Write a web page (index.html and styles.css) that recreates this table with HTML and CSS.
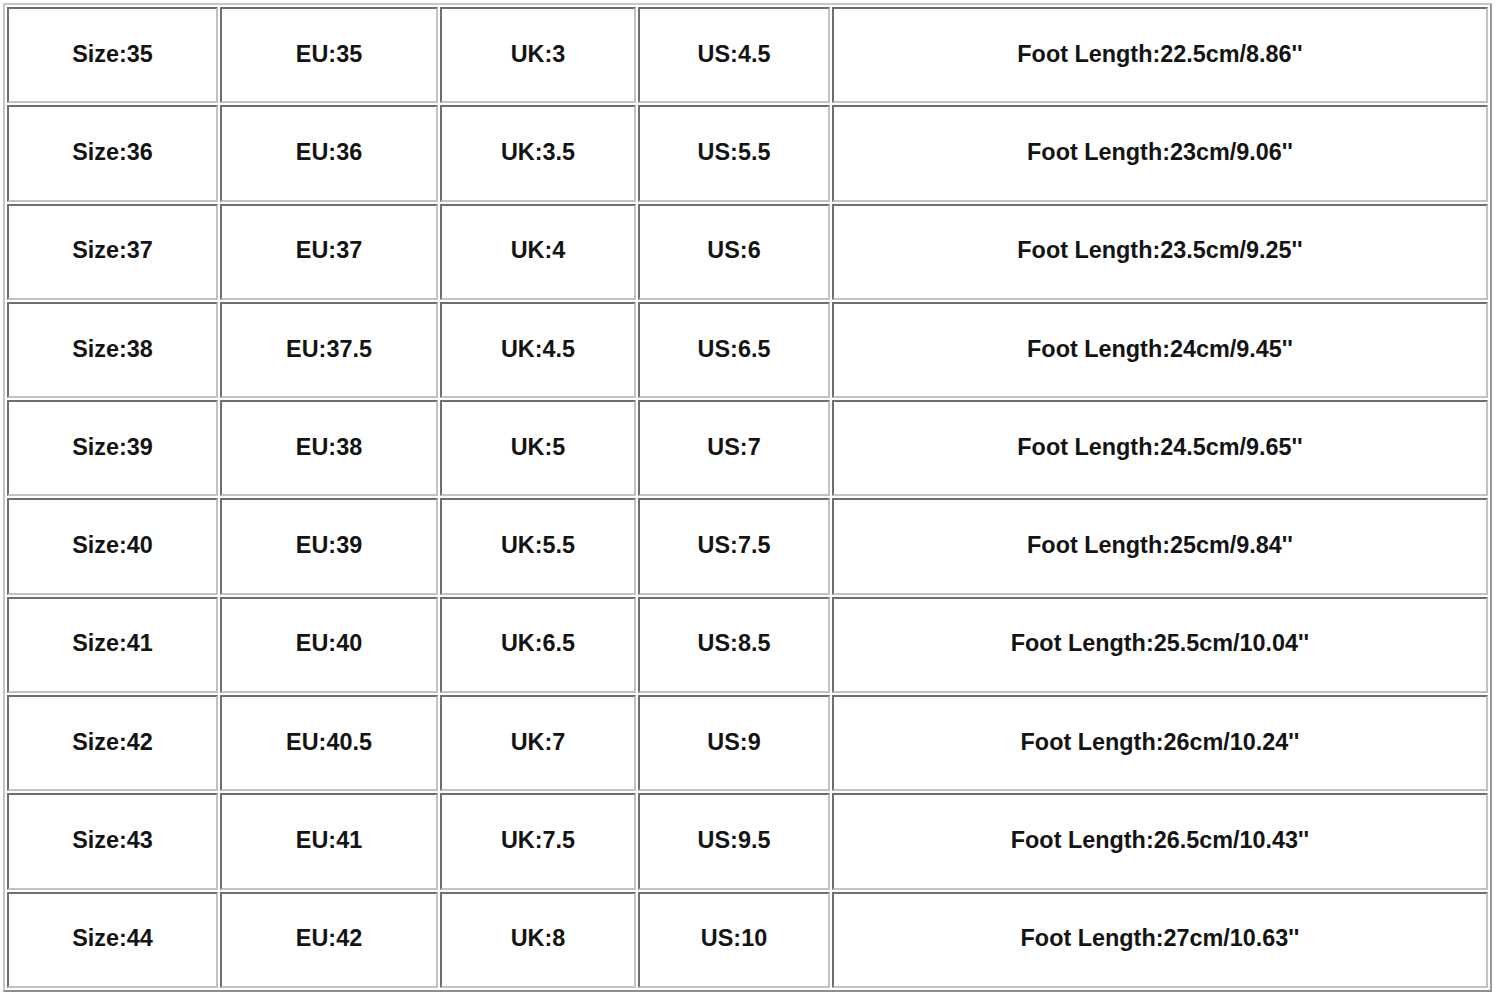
FILE: index.html
```html
<!DOCTYPE html>
<html>
<head>
<meta charset="utf-8">
<link rel="stylesheet" href="styles.css">
</head>
<body>
<table class="chart">
<tr><td class="c1">Size:35</td><td class="c2">EU:35</td><td class="c3">UK:3</td><td class="c4">US:4.5</td><td class="c5">Foot Length:22.5cm/8.86''</td></tr>
<tr><td>Size:36</td><td>EU:36</td><td>UK:3.5</td><td>US:5.5</td><td>Foot Length:23cm/9.06''</td></tr>
<tr><td>Size:37</td><td>EU:37</td><td>UK:4</td><td>US:6</td><td>Foot Length:23.5cm/9.25''</td></tr>
<tr><td>Size:38</td><td>EU:37.5</td><td>UK:4.5</td><td>US:6.5</td><td>Foot Length:24cm/9.45''</td></tr>
<tr><td>Size:39</td><td>EU:38</td><td>UK:5</td><td>US:7</td><td>Foot Length:24.5cm/9.65''</td></tr>
<tr><td>Size:40</td><td>EU:39</td><td>UK:5.5</td><td>US:7.5</td><td>Foot Length:25cm/9.84''</td></tr>
<tr><td>Size:41</td><td>EU:40</td><td>UK:6.5</td><td>US:8.5</td><td>Foot Length:25.5cm/10.04''</td></tr>
<tr><td>Size:42</td><td>EU:40.5</td><td>UK:7</td><td>US:9</td><td>Foot Length:26cm/10.24''</td></tr>
<tr><td>Size:43</td><td>EU:41</td><td>UK:7.5</td><td>US:9.5</td><td>Foot Length:26.5cm/10.43''</td></tr>
<tr class="last"><td>Size:44</td><td>EU:42</td><td>UK:8</td><td>US:10</td><td>Foot Length:27cm/10.63''</td></tr>
</table>
</body>
</html>
```
FILE: styles.css
```css
html, body {
  margin: 0;
  padding: 0;
  background: #ffffff;
}
.chart {
  margin: 3px 0 0 3px;
  border-collapse: separate;
  border-spacing: 2px;
  border-style: solid;
  border-width: 2px;
  border-color: #c4c4c4 #9a9a9a #8e8e8e #c4c4c4;
  table-layout: fixed;
  font-family: "Liberation Sans", Arial, sans-serif;
  font-weight: bold;
  font-size: 23.4px;
  color: #141414;
}
.chart td {
  box-sizing: border-box;
  height: 96.3px;
  padding: 0 0 2px 0;
  text-align: center;
  vertical-align: middle;
  border-style: solid;
  border-width: 2px;
  border-color: #6e6e6e #c2c2c2 #c2c2c2 #6e6e6e;
  white-space: nowrap;
}
.chart .c1 { width: 211px; }
.chart .c2 { width: 218px; }
.chart .c3 { width: 196px; }
.chart .c4 { width: 192px; }
.chart .c5 { width: 656px; }
```
